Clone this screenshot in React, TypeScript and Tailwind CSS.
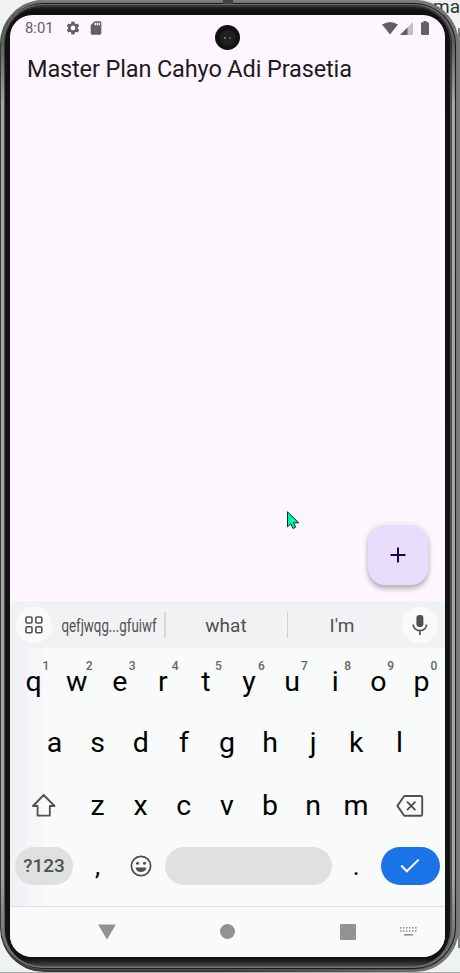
import type { ReactNode } from "react";

const topRow = ["q", "w", "e", "r", "t", "y", "u", "i", "o", "p"];
const homeRow = ["a", "s", "d", "f", "g", "h", "j", "k", "l"];
const lowerRow = ["z", "x", "c", "v", "b", "n", "m"];

function Key({ label, hint }: { label: string; hint?: string }) {
  return (
    <div className="relative flex h-[62px] w-[43.1px] items-center justify-center text-[28.5px] leading-none text-black">
      {label}
      {hint && (
        <span className="absolute top-[9px] left-[30.5px] text-[12px] leading-none font-medium text-[#666]">{hint}</span>
      )}
    </div>
  );
}

function StatusBar() {
  return (
    <div className="flex h-[26px] items-center pl-[15px] text-[#636065]">
      <span className="w-[40px] text-[14.8px] leading-none">8:01</span>
      <svg className="h-4 w-4" viewBox="0 0 24 24" fill="currentColor">
        <path d="M19.14 12.94c.04-.3.06-.61.06-.94s-.02-.64-.07-.94l2.03-1.58a.49.49 0 0 0 .12-.61l-1.92-3.32a.49.49 0 0 0-.59-.22l-2.39.96c-.5-.38-1.03-.7-1.62-.94l-.36-2.54A.48.48 0 0 0 13.92 2.4h-3.84c-.24 0-.43.17-.47.41l-.36 2.54c-.59.24-1.13.57-1.62.94l-2.39-.96a.47.47 0 0 0-.59.22L2.74 8.87c-.12.21-.08.47.12.61l2.03 1.58c-.05.3-.09.63-.09.94s.02.64.07.94l-2.03 1.58a.49.49 0 0 0-.12.61l1.92 3.32c.12.22.37.29.59.22l2.39-.96c.5.38 1.03.7 1.62.94l.36 2.54c.05.24.24.41.48.41h3.84c.24 0 .44-.17.47-.41l.36-2.54c.59-.24 1.13-.56 1.62-.94l2.39.96c.22.08.47 0 .59-.22l1.92-3.32a.47.47 0 0 0-.12-.61zM12 15.6a3.6 3.6 0 1 1 0-7.2 3.6 3.6 0 0 1 0 7.2z" />
      </svg>
      <svg className="ml-[7px] h-4 w-4" viewBox="0 0 24 24" fill="currentColor">
        <path d="M18 2h-8L4.02 8 4 20a2 2 0 0 0 2 2h12a2 2 0 0 0 2-2V4a2 2 0 0 0-2-2zm-6 6h-2V4h2v4zm3 0h-2V4h2v4zm3 0h-2V4h2v4z" />
      </svg>
      <svg className="ml-auto h-[13px] w-4" viewBox="0 0 16 13" fill="currentColor">
        <path d="M0 2.6Q8-2.6 16 2.6L8 12.6z" />
      </svg>
      <svg className="ml-[2px] h-[13px] w-[13px]" viewBox="0 0 13 13">
        <path d="M0 13 13 0v13z" fill="#c4bfc7" />
        <path d="M0 13 7.5 5.5V13z" fill="#636065" />
      </svg>
      <svg className="mr-[16px] ml-2 h-[14px] w-2" viewBox="0 0 8 14" fill="currentColor">
        <path d="M2.5 0h3v1.3H7q1 0 1 1V13q0 1-1 1H1q-1 0-1-1V2.3q0-1 1-1h1.5z" />
      </svg>
    </div>
  );
}

function SuggestionBar() {
  return (
    <div className="flex h-[47px] shrink-0 items-center bg-[#f1f2f4] text-[19px] text-[#505050]">
      <div className="ml-[6px] flex h-9 w-9 items-center justify-center rounded-full bg-[#f9fbfa]">
        <svg width="18" height="18" viewBox="0 0 18 18" fill="none" stroke="#505050" strokeWidth="1.6">
          <rect x="1" y="1" width="6" height="6" rx="1.3" />
          <rect x="10.8" y="1" width="6" height="6" rx="1.3" />
          <rect x="1" y="10.8" width="6" height="6" rx="1.3" />
          <rect x="10.8" y="10.8" width="6" height="6" rx="1.3" />
        </svg>
      </div>
      <div className="flex w-[112px] justify-center pt-[3px] pl-[3px] whitespace-nowrap">
        <span className="scale-x-[0.7]">qefjwqg...gfuiwf</span>
      </div>
      <div className="h-[26px] w-[1.5px] bg-[#d7d8da]" />
      <div className="w-[121px] pt-[3px] text-center">what</div>
      <div className="h-[26px] w-[1.5px] bg-[#d0d1d3]" />
      <div className="w-[108px] pt-[3px] text-center">I'm</div>
      <div className="mr-[7px] ml-auto flex h-9 w-9 items-center justify-center rounded-full bg-[#f9fbfa]">
        <svg width="16" height="20" viewBox="0 0 16 20" fill="none">
          <rect x="4.4" y="0" width="7" height="12" rx="3" fill="#505050" />
          <path d="M1.2 9.5a6.7 6.2 0 0 0 13.4 0M7.9 16v4" stroke="#505050" strokeWidth="1.7" />
        </svg>
      </div>
    </div>
  );
}

function Keyboard() {
  return (
    <div className="h-[258px] shrink-0 bg-[linear-gradient(90deg,#f0f1f4_0px,#f2f3f6_16px,#f5f6f9_18px,#f6f7f9_32px,#f9fbfa_36px)]">
      <div className="flex h-[62px] justify-center pt-[3px]">
        {topRow.map((k, i) => (
          <Key key={k} label={k} hint={String((i + 1) % 10)} />
        ))}
      </div>
      <div className="flex h-[62.5px] justify-center pt-[2px] pr-px">
        {homeRow.map((k) => (
          <Key key={k} label={k} />
        ))}
      </div>
      <div className="flex h-[62.5px] items-center pt-[4px]">
        <div className="flex w-[66px] justify-center pl-[2px]">
          <svg width="24" height="23" viewBox="0 0 24 23" fill="none" stroke="#505050" strokeWidth="1.8" strokeLinejoin="round">
            <path d="M11.7 1 1 12h4.6v9.7h12.2V12h4.7z" />
          </svg>
        </div>
        {lowerRow.map((k) => (
          <Key key={k} label={k} />
        ))}
        <div className="ml-[18px]">
          <svg width="28" height="22" viewBox="0 0 28 22" fill="none" stroke="#505050" strokeWidth="1.9" strokeLinejoin="round">
            <path d="M8.2 1H25q1.2 0 1.2 1.2v17.4q0 1.2-1.2 1.2H8.2L1.4 10.9z" />
            <path d="m11 6.7 8.4 8.4m0-8.4L11 15.1" />
          </svg>
        </div>
      </div>
      <div className="flex h-[62px] items-center">
        <div className="ml-[5px] flex h-[38px] w-[58px] items-center justify-center rounded-full bg-[#dfe1e1] pt-px text-[19px] font-medium text-[#505050]">
          ?123
        </div>
        <div className="w-[49px] pt-px text-center text-[26px] text-black">,</div>
        <svg className="ml-[7.5px]" width="22" height="22" viewBox="0 0 22 22">
          <circle cx="11" cy="11" r="9.6" fill="none" stroke="#505050" strokeWidth="1.8" />
          <circle cx="7.5" cy="8.2" r="1.5" fill="#505050" />
          <circle cx="14.5" cy="8.2" r="1.5" fill="#505050" />
          <path d="M5.5 12.4h11Q15.3 17 11 17t-5.5-4.6" fill="#505050" />
        </svg>
        <div className="ml-[13.5px] h-[38px] w-[167px] rounded-full bg-[#dfe1e1]" />
        <div className="w-[48.5px] text-center text-[26px] text-black">.</div>
        <div className="flex h-[38px] w-[59px] items-center justify-center rounded-full bg-[#1b73e8]">
          <svg width="20" height="16" viewBox="0 0 20 16" fill="none" stroke="white" strokeWidth="2">
            <path d="m1.2 7.5 5.6 5.8L18.7 1.6" />
          </svg>
        </div>
      </div>
    </div>
  );
}

function NavigationBar() {
  return (
    <div className="flex h-[51px] shrink-0 items-center border-t border-[#dfe1e1] bg-[#f9fbfa] pb-px text-[#929292]">
      <svg className="ml-[88px]" width="18" height="16" viewBox="0 0 18 16" fill="currentColor">
        <path d="M.7.5h16.6q.5 0 .3.5L9.4 15q-.4.7-.8 0L.4 1Q.1.5.7.5" />
      </svg>
      <div className="ml-[103.5px] h-[15px] w-[15px] rounded-full bg-[#929292]" />
      <div className="ml-[105px] h-4 w-4 rounded-[1px] bg-[#929292]" />
      <svg className="ml-[44px]" width="17" height="10" viewBox="0 0 17 10" fill="currentColor">
        {[0, 3.2].map((y) =>
          [0, 3, 6, 9, 12, 15].map((x) => <rect key={`${x}-${y}`} x={x} y={y} width="1.5" height="1.6" />)
        )}
        <rect x="4" y="7" width="9" height="1.6" />
      </svg>
    </div>
  );
}

function Phone({ children }: { children: ReactNode }) {
  return (
    <div className="h-[972px] w-[459px] rounded-[44px] bg-[linear-gradient(90deg,#3a3a3a_0,#3a3a3a_50%,#777_98%,#777_100%)] pr-[3px] pb-[2px] pl-px">
      <div className="h-full w-full rounded-[43px] bg-[linear-gradient(180deg,#858585_0,#777_2px,#666_50px,#888_120px,#888_850px,#555_930px)] pt-[3px] pb-px">
        <div className="h-full w-full rounded-[42px] bg-[#1c1c1c] p-px pl-0">
          <div className="h-full w-full rounded-[41px] bg-[linear-gradient(180deg,#6a6a6a_0,#606060_40px,#a5a5a5_100px,#a5a5a5_870px,#707070_940px)] pt-px pr-[3px] pb-px pl-[3px]">
            <div className="h-full w-full rounded-[38px] bg-[linear-gradient(180deg,#383838_0,#333_40px,#505050_90px,#505050_880px,#606060_100%)] pt-[2px] pr-[2px] pb-px pl-px">
              <div className="h-full w-full rounded-[36px] bg-[linear-gradient(180deg,#242424_0,#111_4px,#131313_calc(100%-7px),#444_100%)] pt-[8px] pr-[4px] pb-[8px] pl-[5px]">
                <div className="relative flex h-[942px] w-[435px] flex-col overflow-hidden rounded-[22px] bg-[#fdf6fe]">
                  {children}
                </div>
              </div>
            </div>
          </div>
        </div>
      </div>
    </div>
  );
}

export default function App() {
  return (
    <div className="relative h-[973px] w-[460px] overflow-hidden bg-[#eef3f0] font-[Roboto,sans-serif]">
      <span className="absolute top-[-5px] left-[433px] text-[19px] leading-[24px] text-[#333]">ma</span>
      <div className="absolute top-[28px] right-0 h-[920px] w-[2px] bg-[#808080]" />
      <div className="absolute bottom-0 left-0 h-px w-full bg-[#aaa]" />
      <div className="relative">
        <Phone>
          <StatusBar />
          <h1 className="pt-[14px] pl-[17px] text-[23.5px] leading-[28px] tracking-[-0.13px] whitespace-nowrap text-[#1d1b20]">
            Master Plan Cahyo Adi Prasetia
          </h1>
          <div className="mt-auto mr-[17px] mb-4 flex h-[60px] w-[60px] shrink-0 items-center justify-center self-end rounded-[17px] bg-[#e8ddfc] shadow-[0_4px_5px_rgba(0,0,0,0.22),0_1px_7px_rgba(0,0,0,0.12)]">
            <svg width="16" height="16" viewBox="0 0 16 16" stroke="#21005d" strokeWidth="2">
              <path d="M8 .5v15M.5 8h15" />
            </svg>
          </div>
          <SuggestionBar />
          <Keyboard />
          <NavigationBar />
          <div className="absolute top-[10px] left-[205px] flex h-[25px] w-[25px] items-center justify-center rounded-full bg-[#111]">
            <div className="flex h-4 w-4 items-center justify-center gap-[3px] rounded-full bg-[#202020]">
              <i className="h-[2px] w-[2px] rounded-full bg-[#8c8060]" />
              <i className="h-[2px] w-[2px] rounded-full bg-[#9b5a48]" />
            </div>
          </div>
          <svg className="absolute top-[496px] left-[277px]" width="13" height="19" viewBox="0 0 13 19">
            <path d="M.5.8v15l3.3-3 2.2 4.7 2.6-1.3-2.1-4.4h5.2z" fill="#00f5ae" stroke="#062d24" strokeWidth="1" />
          </svg>
        </Phone>
        <div className="absolute top-0 left-[223px] h-[4px] w-[10px] bg-[#444]" />
      </div>
    </div>
  );
}
